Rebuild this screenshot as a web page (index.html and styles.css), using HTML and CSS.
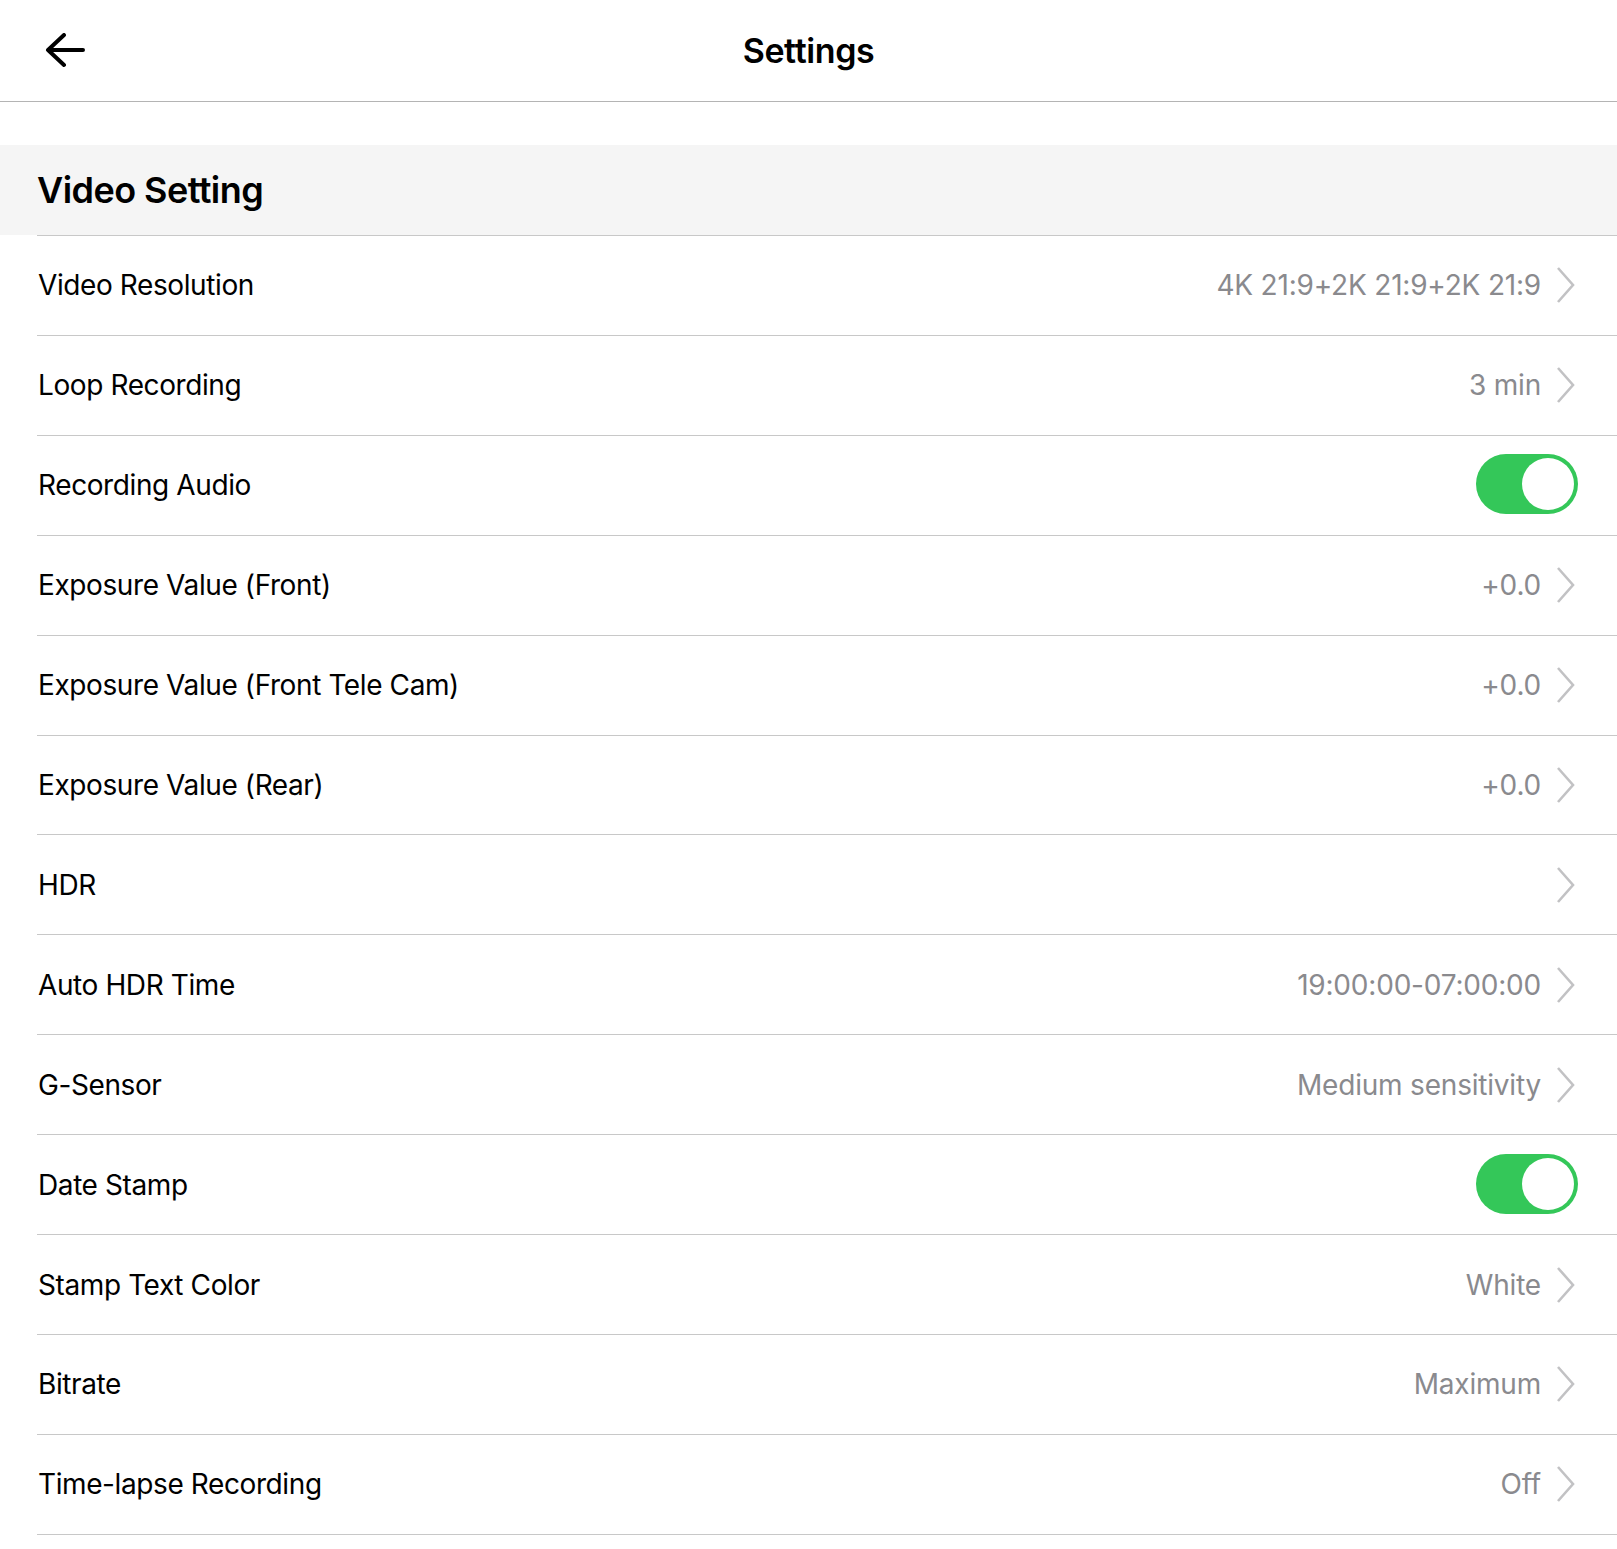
FILE: index.html
```html
<!DOCTYPE html>
<html lang="en">
<head>
<meta charset="utf-8">
<title>Settings</title>
<link rel="stylesheet" href="styles.css">
</head>
<body>
<header class="topbar">
  <button class="back" aria-label="Back">
    <svg width="40" height="40" viewBox="0 0 40 40"><path d="M38 17H4M19 2L3 17L19 32" fill="none" stroke="#000" stroke-width="4" stroke-linecap="round" stroke-linejoin="round"/></svg>
  </button>
  <h1 class="title">Settings</h1>
</header>
<div class="spacer"></div>
<section class="group">
  <h2 class="group-title">Video Setting</h2>
  <ul class="list">
    <li class="row"><span class="label">Video Resolution</span><span class="value">4K 21:9+2K 21:9+2K 21:9</span><svg class="chev" width="20" height="38" viewBox="0 0 20 38"><polyline points="2,2 17,19 2,36" fill="none" stroke="#c2c2c4" stroke-width="2.6"/></svg></li>
    <li class="row"><span class="label">Loop Recording</span><span class="value">3 min</span><svg class="chev" width="20" height="38" viewBox="0 0 20 38"><polyline points="2,2 17,19 2,36" fill="none" stroke="#c2c2c4" stroke-width="2.6"/></svg></li>
    <li class="row"><span class="label">Recording Audio</span><span class="toggle on"><span class="knob"></span></span></li>
    <li class="row"><span class="label">Exposure Value (Front)</span><span class="value">+0.0</span><svg class="chev" width="20" height="38" viewBox="0 0 20 38"><polyline points="2,2 17,19 2,36" fill="none" stroke="#c2c2c4" stroke-width="2.6"/></svg></li>
    <li class="row"><span class="label">Exposure Value (Front Tele Cam)</span><span class="value">+0.0</span><svg class="chev" width="20" height="38" viewBox="0 0 20 38"><polyline points="2,2 17,19 2,36" fill="none" stroke="#c2c2c4" stroke-width="2.6"/></svg></li>
    <li class="row"><span class="label">Exposure Value (Rear)</span><span class="value">+0.0</span><svg class="chev" width="20" height="38" viewBox="0 0 20 38"><polyline points="2,2 17,19 2,36" fill="none" stroke="#c2c2c4" stroke-width="2.6"/></svg></li>
    <li class="row"><span class="label">HDR</span><span class="value"></span><svg class="chev" width="20" height="38" viewBox="0 0 20 38"><polyline points="2,2 17,19 2,36" fill="none" stroke="#c2c2c4" stroke-width="2.6"/></svg></li>
    <li class="row"><span class="label">Auto HDR Time</span><span class="value">19:00:00-07:00:00</span><svg class="chev" width="20" height="38" viewBox="0 0 20 38"><polyline points="2,2 17,19 2,36" fill="none" stroke="#c2c2c4" stroke-width="2.6"/></svg></li>
    <li class="row"><span class="label">G-Sensor</span><span class="value">Medium sensitivity</span><svg class="chev" width="20" height="38" viewBox="0 0 20 38"><polyline points="2,2 17,19 2,36" fill="none" stroke="#c2c2c4" stroke-width="2.6"/></svg></li>
    <li class="row"><span class="label">Date Stamp</span><span class="toggle on"><span class="knob"></span></span></li>
    <li class="row"><span class="label">Stamp Text Color</span><span class="value">White</span><svg class="chev" width="20" height="38" viewBox="0 0 20 38"><polyline points="2,2 17,19 2,36" fill="none" stroke="#c2c2c4" stroke-width="2.6"/></svg></li>
    <li class="row"><span class="label">Bitrate</span><span class="value">Maximum</span><svg class="chev" width="20" height="38" viewBox="0 0 20 38"><polyline points="2,2 17,19 2,36" fill="none" stroke="#c2c2c4" stroke-width="2.6"/></svg></li>
    <li class="row"><span class="label">Time-lapse Recording</span><span class="value">Off</span><svg class="chev" width="20" height="38" viewBox="0 0 20 38"><polyline points="2,2 17,19 2,36" fill="none" stroke="#c2c2c4" stroke-width="2.6"/></svg></li>
  </ul>
</section>
</body>
</html>
```
FILE: styles.css
```css
* { box-sizing: border-box; }
html, body { margin: 0; padding: 0; background: #fff; }
body {
  font-family: Inter, "Noto Sans", "Liberation Sans", sans-serif;
  color: #000;
}
.topbar {
  position: relative;
  height: 102px;
  border-bottom: 1px solid #b4b4b4;
  display: flex;
  align-items: center;
  justify-content: center;
}
.back {
  position: absolute;
  left: 45px;
  top: 33px;
  width: 40px;
  height: 40px;
  padding: 0;
  border: 0;
  background: none;
  display: block;
}
.back svg { display: block; }
.title {
  margin: 0;
  font-size: 34px;
  font-weight: 600;
  letter-spacing: -0.4px;
}
.spacer { height: 43px; }
.group-title {
  margin: 0;
  height: 90px;
  background: #f5f5f5;
  padding-left: 37px;
  display: flex;
  align-items: center;
  font-size: 36px;
  font-weight: 600;
  letter-spacing: -0.55px;
}
.list {
  list-style: none;
  margin: 0 0 0 37px;
  padding: 0;
  border-top: 1px solid #c8c8c8;
}
.row {
  height: 99.92px;
  border-bottom: 1px solid #c8c8c8;
  display: flex;
  align-items: center;
  padding-right: 41px;
}
.label {
  flex: 1;
  font-size: 28px;
  font-weight: 400;
  letter-spacing: -0.4px;
  padding-left: 1px;
}
.value {
  font-size: 28px;
  color: #8a8a8e;
  letter-spacing: -0.2px;
  margin-right: 15px;
}
.chev { display: block; flex: none; }
.toggle {
  position: relative;
  width: 102px;
  height: 60px;
  border-radius: 30px;
  background: #34c759;
  margin-right: -2px;
  margin-top: -2px;
}
.knob {
  position: absolute;
  right: 4px;
  top: 4px;
  width: 52px;
  height: 52px;
  border-radius: 50%;
  background: #fff;
}
```
